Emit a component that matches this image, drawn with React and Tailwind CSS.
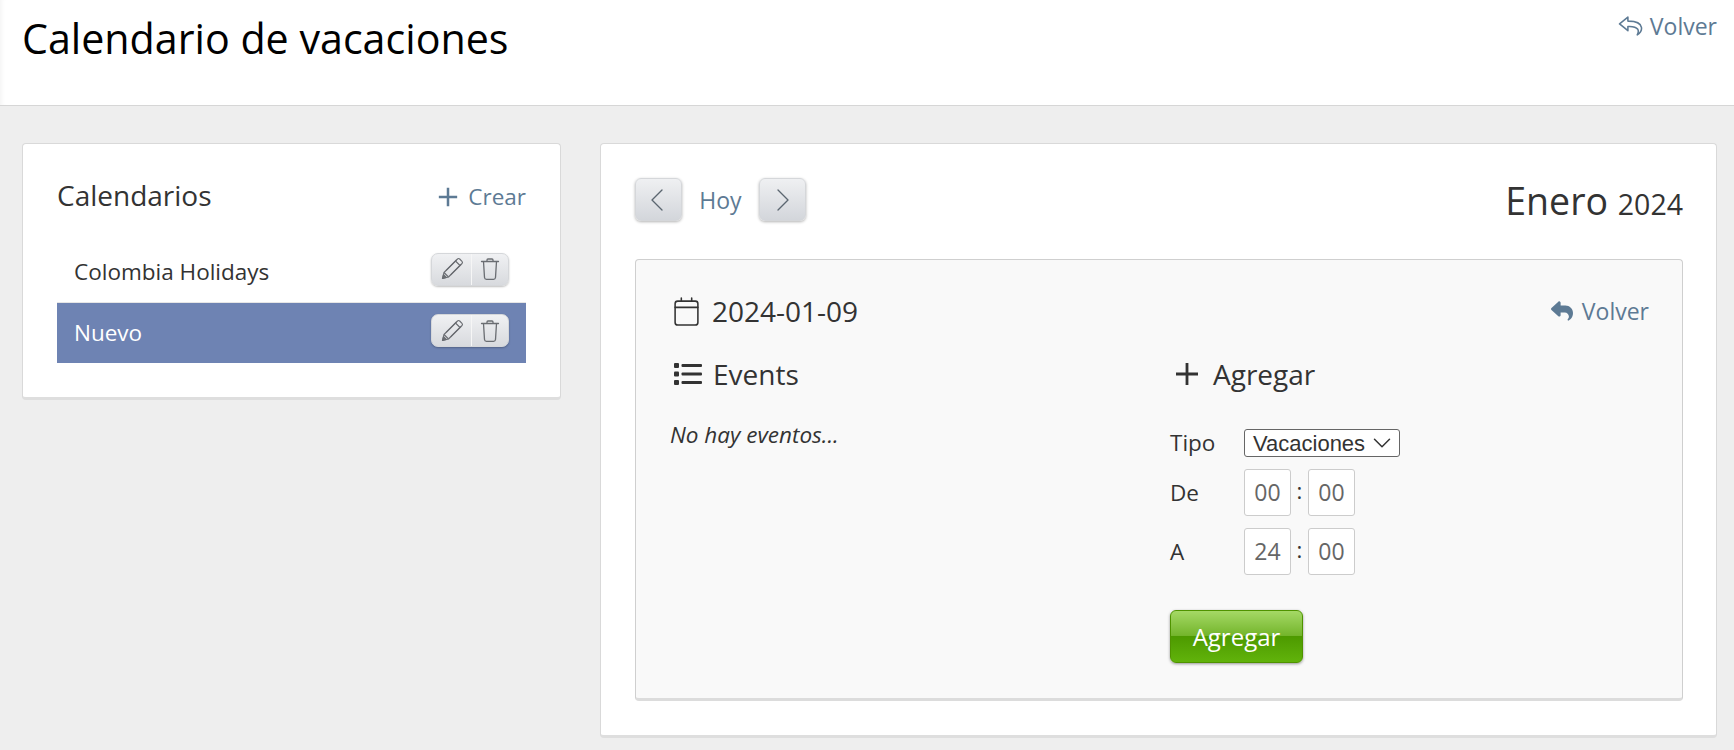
import React from 'react';
import { FaReply } from 'react-icons/fa6';
import { ChevronDown, ChevronLeft, ChevronRight } from 'lucide-react';

const font = "font-['Open_Sans',sans-serif]";

function ReplyOutline({ className }) {
  return (
    <svg viewBox="0 0 24 20" className={className} fill="none" stroke="currentColor" strokeWidth="1.5" strokeLinejoin="round" strokeLinecap="round">
      <path d="M9.5 1.5 1.5 8l8 6.5v-4c5-.3 8 .7 9.5 2.7.8 1.200.6 3-.5 5.300 3-2 4.500-4.500 4-7.200C21.700 6.700 17 5.200 9.500 5.300Z" />
    </svg>
  );
}

function PlusIcon({ className, width = 3 }) {
  return (
    <svg viewBox="0 0 24 24" className={className} fill="none" stroke="currentColor" strokeWidth={width}>
      <path d="M12 1v22M1 12h22" />
    </svg>
  );
}

function ListIcon({ className }) {
  return (
    <svg viewBox="0 0 28 24" className={className} fill="currentColor">
      <rect x="0" y="1" width="5" height="5" rx="1" />
      <rect x="0" y="9.500" width="5" height="5" rx="1" />
      <rect x="0" y="18" width="5" height="5" rx="1" />
      <rect x="7.500" y="2" width="20.500" height="3" rx="1" />
      <rect x="7.500" y="10.500" width="20.500" height="3" rx="1" />
      <rect x="7.500" y="19" width="20.500" height="3" rx="1" />
    </svg>
  );
}

function PencilIcon() {
  return (
    <svg viewBox="0 0 24 24" className="w-[24px] h-[24px] text-[#6a6d72]" fill="none" stroke="currentColor" strokeWidth="1.1" strokeLinejoin="round">
      <path d="M2.500 21.500l1.500-6L17.500 2a1.600 1.600 0 0 1 2.200 0l2.300 2.300a1.600 1.600 0 0 1 0 2.200L8.500 20Z" />
      <path d="M4 15.500 8.500 20M15.500 4l4.500 4.500M6.200 13.300 16.500 3M10.700 17.800 21 7.500" />
      <path d="M2.500 21.500l1-3.800 2.800 2.800Z" fill="currentColor" />
    </svg>
  );
}

function TrashIcon() {
  return (
    <svg viewBox="0 0 24 24" className="w-[24px] h-[24px] text-[#6a6d72]" fill="none" stroke="currentColor" strokeWidth="1.300" strokeLinecap="round" strokeLinejoin="round">
      <path d="M3.500 4.500h17M9 4.500V3a1 1 0 0 1 1-1h4a1 1 0 0 1 1 1v1.500M5.500 4.500l1 16a2 2 0 0 0 2 1.800h7a2 2 0 0 0 2-1.800l1-16" />
    </svg>
  );
}

function CalendarIcon() {
  return (
    <svg viewBox="0 0 24 28" className="w-[25px] h-[29px] text-[#333]" fill="none" stroke="currentColor" strokeWidth="1.500" strokeLinejoin="round" strokeLinecap="round">
      <rect x="1" y="4" width="22" height="23" rx="2.500" />
      <path d="M1 10h22M7 1v3M17 1v3" />
    </svg>
  );
}

function RowActions() {
  return (
    <div className="mb-[5px] flex h-[33px] w-[78px] rounded-[7px] border border-[#d5d7da] bg-gradient-to-b from-[#f0f1f3] to-[#d8dade] shadow-[0_1px_2px_rgba(0,0,0,0.25)]">
      <div className="flex w-[40px] items-center justify-center border-r border-[#f6f6f6]"><PencilIcon /></div>
      <div className="flex flex-1 items-center justify-center"><TrashIcon /></div>
    </div>
  );
}

function NavButton({ children }) {
  return (
    <button className="flex h-[43px] w-[47px] items-center justify-center rounded-[6px] border border-[#d5d7da] bg-gradient-to-b from-[#eff0f2] to-[#d3d6db] text-[#5b6670] shadow-[0_1px_3px_rgba(0,0,0,0.3)]">
      {children}
    </button>
  );
}

function TimeBox({ value }) {
  return (
    <div className="flex h-[47px] w-[47px] items-center justify-center rounded-[3px] border border-[#ccc] bg-white text-[23px] text-[#666]">{value}</div>
  );
}

function TimeRow({ label, hour, className }) {
  return (
    <div className={`flex items-center ${className}`}>
      <span className="w-[74px] text-[22.500px] text-[#333]">{label}</span>
      <TimeBox value={hour} />
      <span className="w-[17px] text-center text-[#333] text-[22px] -mt-1">:</span>
      <TimeBox value="00" />
    </div>
  );
}

export default function App() {
  return (
    <div className={`${font} min-h-screen bg-[#eeeeee] flex flex-col`}>
      <header className="flex h-[106px] justify-between border-b border-[#d6d6d6] bg-white pl-[22px] pr-[17px] shadow-[inset_6px_0_6px_-6px_rgba(0,0,0,0.08)]">
        <h1 className="mt-[10px] text-[41.200px] leading-[56px] text-black">Calendario de vacaciones</h1>
        <a className="mt-[10px] flex h-[32px] items-center gap-[7px] text-[23px] text-[#5d7a94]">
          <ReplyOutline className="w-[25px] h-[22px]" />
          Volver
        </a>
      </header>

      <main className="flex items-start gap-[39px] pl-[22px] pr-[17px] pt-[37px]">
        <section className="w-[539px] h-[257px] shrink-0 rounded-[4px] border border-[#d9d9d9] border-b-[3px] border-b-[#dedede] bg-white px-[34px] pt-[33px]">
          <div className="flex items-center justify-between h-[36px] text-[#333]">
            <h2 className="text-[28px]">Calendarios</h2>
            <a className="mt-[3px] flex items-center gap-[10px] text-[22.500px] text-[#5d7a94]">
              <PlusIcon className="w-[20px] h-[20px]" />
              Crear
            </a>
          </div>
          <ul className="mt-[28px]">
            <li className="flex h-[62px] items-center justify-between border-b border-[#e6e6e6] pl-[17px] pr-[17px] text-[22.500px] text-[#333]">
              Colombia Holidays
              <RowActions />
            </li>
            <li className="flex h-[60px] items-center justify-between bg-[#6e83b3] pl-[17px] pr-[17px] text-[22.500px] text-white">
              Nuevo
              <RowActions />
            </li>
          </ul>
        </section>

        <section className="flex-1 h-[595px] rounded-[4px] border border-[#d9d9d9] border-b-[3px] border-b-[#dedede] bg-white pl-[34px] pr-[33px] pt-[34px]">
          <div className="flex items-start justify-between">
            <div className="flex items-center">
              <NavButton><ChevronLeft strokeWidth={0.8} className="w-[40px] h-[40px] -ml-[3px]" /></NavButton>
              <span className="mt-[1px] w-[77px] text-center text-[23px] text-[#5d7a94]">Hoy</span>
              <NavButton><ChevronRight strokeWidth={0.8} className="w-[40px] h-[40px]" /></NavButton>
            </div>
            <h2 className="-mt-[2px] text-[37.500px] leading-[50px] text-[#333]">Enero <span className="text-[28.500px]">2024</span></h2>
          </div>

          <div className="mt-[30px] h-[442px] rounded-[4px] border border-[#cfcfcf] border-b-[3px] border-b-[#dcdcdc] bg-[#f9f9f9] pl-[38px] pr-[33px] pt-[31px]">
            <div className="flex items-center justify-between h-[40px]">
              <div className="flex items-center gap-[13px] text-[28px] text-[#333]">
                <CalendarIcon />
                2024-01-09
              </div>
              <a className="flex items-center gap-[8px] text-[23px] text-[#5d7a94]">
                <FaReply className="w-[24px] h-[22px]" />
                Volver
              </a>
            </div>

            <div className="mt-[23px] flex">
              <div className="w-[496px]">
                <div className="flex items-center gap-[11px] text-[28px] text-[#333] h-[40px]">
                  <ListIcon className="w-[28px] h-[24px]" />
                  Events
                </div>
                <p className="mt-[24px] -ml-[4px] text-[22.500px] italic text-[#333]">No hay eventos...</p>
              </div>
              <div className="flex-1">
                <div className="flex items-center gap-[14px] pl-[5px] text-[28px] text-[#333] h-[40px]">
                  <PlusIcon className="w-[24px] h-[24px]" width={2.8} />
                  Agregar
                </div>
                <div className="mt-[34px] flex items-center h-[30px]">
                  <span className="w-[74px] text-[22.500px] text-[#333]">Tipo</span>
                  <div className="flex h-[28px] w-[156px] items-center justify-between rounded-[3px] border border-[#666] bg-white pl-[8px] pr-[2px] font-['Liberation_Sans',sans-serif] text-[22px] text-[#333]">
                    Vacaciones
                    <ChevronDown className="w-[30px] h-[30px] shrink-0" strokeWidth={1.200} />
                  </div>
                </div>
                <TimeRow label="De" hour="00" className="mt-[11px]" />
                <TimeRow label="A" hour="24" className="mt-[12px]" />
                <button className="mt-[35px] block h-[53px] w-[133px] rounded-[6px] border border-[#4f9300] bg-[linear-gradient(#a5d966_0%,#74b52c_48%,#4d9a00_50%,#61b30b_100%)] text-[24px] text-white shadow-[0_1px_3px_rgba(0,0,0,0.4)]">
                  Agregar
                </button>
              </div>
            </div>
          </div>
        </section>
      </main>
    </div>
  );
}
